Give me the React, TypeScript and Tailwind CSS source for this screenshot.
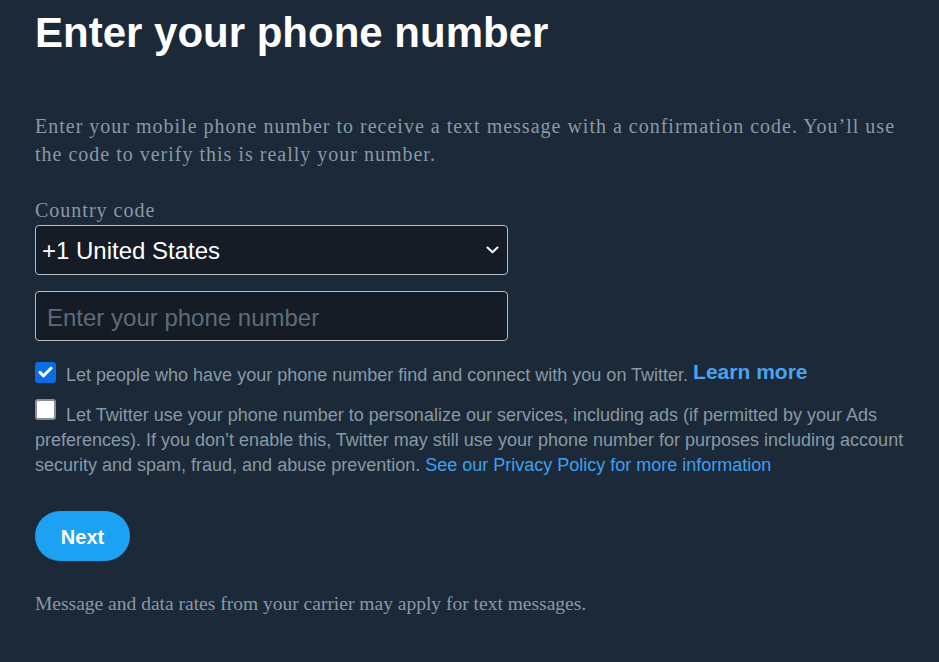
import React from "react";

export default function App() {
  return (
    <div className="min-h-screen w-full bg-[#1c2938] px-[35px] pt-[9px] pb-10">
      <h1 className="text-[42px] leading-[48px] font-bold text-white [font-family:'Liberation_Sans',Arial,sans-serif]">
        Enter your phone number
      </h1>

      <p className="mt-[55px] text-[20px] leading-[28px] tracking-[1px] text-[#8899a6] [font-family:'Liberation_Serif','Times_New_Roman',serif]">
        Enter your mobile phone number to receive a text message with a confirmation code. You’ll use the code to verify this is really your number.
      </p>

      <div className="mt-[28px] text-[20px] leading-[28px] tracking-[1px] text-[#8899a6] [font-family:'Liberation_Serif','Times_New_Roman',serif]">
        Country code
      </div>

      <div className="mt-px flex h-[50px] w-[473px] items-center justify-between rounded-[4px] border border-[#b4bcc4] bg-[#151c26] pl-[6px] pr-[8px] [font-family:'Liberation_Sans',Arial,sans-serif]">
        <span className="pt-[2px] text-[24px] text-white">+1 United States</span>
        <svg width="13" height="8" viewBox="0 0 13 8" fill="none">
          <path d="M1.5 1.5 L6.5 6.2 L11.5 1.5" stroke="white" strokeWidth="2" strokeLinecap="round" strokeLinejoin="round" />
        </svg>
      </div>

      <div className="mt-4 flex h-[50px] w-[473px] items-center rounded-[4px] border border-[#b4bcc4] bg-[#151c26] pl-[11px] pt-[3px] [font-family:'Liberation_Sans',Arial,sans-serif]">
        <span className="text-[24px] text-[#5f6b78]">Enter your phone number</span>
      </div>

      <p className="mt-[20px] text-[18px] leading-[25px] text-[#8899a6] [font-family:'Liberation_Sans',Arial,sans-serif]">
        <span className="mr-[10px] inline-flex h-[21px] w-[21px] items-center justify-center rounded-[3px] bg-[#0b6de6] align-[3px]">
          <svg width="15" height="12" viewBox="0 0 15 12" fill="none">
            <path d="M2 6.3 L5.6 9.8 L13 2.2" stroke="white" strokeWidth="3" strokeLinecap="round" strokeLinejoin="round" />
          </svg>
        </span>
        Let people who have your phone number find and connect with you on Twitter.{" "}
        <span className="relative -top-[2px] text-[21px] font-bold text-[#4aa3ec]">Learn more</span>
      </p>

      <p className="mt-[11px] text-[18px] leading-[25px] text-[#8899a6] [font-family:'Liberation_Sans',Arial,sans-serif]">
        <span className="mr-[10px] inline-block h-[21px] w-[21px] rounded-[3px] border-2 border-[#8a8e96] bg-white align-[1px]" />
        Let Twitter use your phone number to personalize our services, including ads (if permitted by your Ads preferences). If you don’t enable this, Twitter may still use your phone number for purposes including account security and spam, fraud, and abuse prevention.{" "}
        <span className="text-[#3ea1f0]">See our Privacy Policy for more information</span>
      </p>

      <button className="mt-[33px] flex h-[50px] w-[95px] items-center justify-center rounded-full bg-[#1da1f2] pt-[2px] text-[20px] font-bold text-white [font-family:'Liberation_Sans',Arial,sans-serif]">
        Next
      </button>

      <p className="mt-[29px] text-[19.5px] leading-[28px] text-[#8899a6] [font-family:'Liberation_Serif','Times_New_Roman',serif]">
        Message and data rates from your carrier may apply for text messages.
      </p>
    </div>
  );
}
